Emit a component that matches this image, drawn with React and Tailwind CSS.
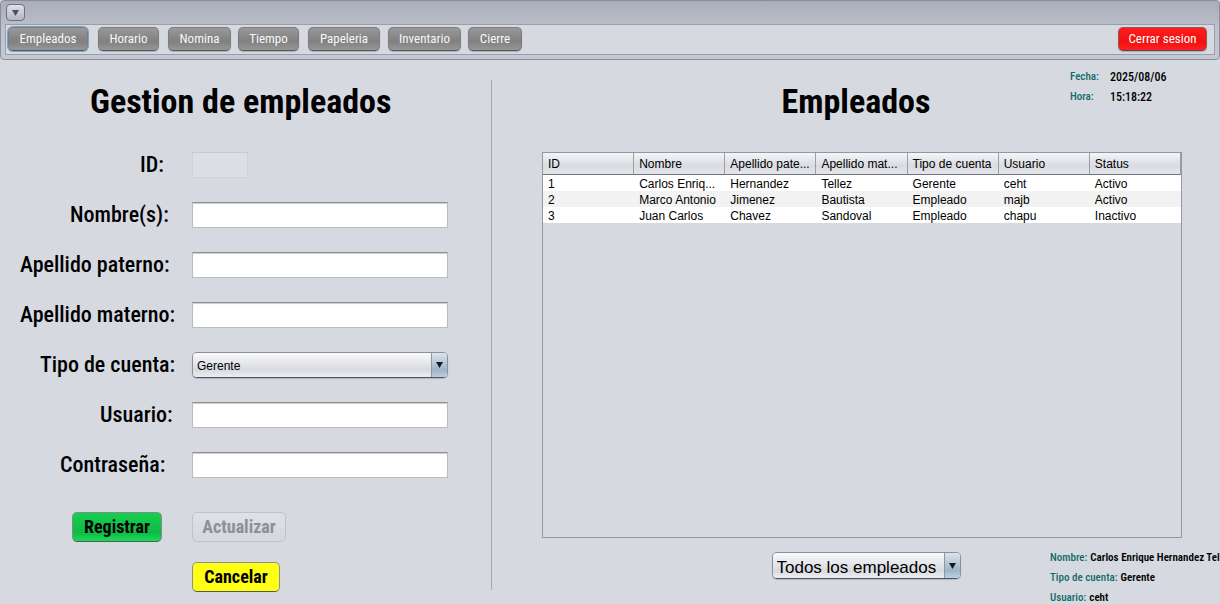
import React from "react";

const NARROW = "font-['Roboto_Condensed','Liberation_Sans_Narrow','Arial_Narrow',sans-serif]";

const tabs = [
  { label: "Empleados", cell: "w-[90px]", button: "w-[80px]", active: true },
  { label: "Horario", cell: "w-[70px]", button: "w-[61px]" },
  { label: "Nomina", cell: "w-[70px]", button: "w-[63px]" },
  { label: "Tiempo", cell: "w-[70px]", button: "w-[61px]" },
  { label: "Papeleria", cell: "w-[80px]", button: "w-[72px]" },
  { label: "Inventario", cell: "w-[80px]", button: "w-[73px]" },
  { label: "Cierre", cell: "w-[54px]", button: "w-[54px]" },
];

const columns = [
  "ID",
  "Nombre",
  "Apellido pate...",
  "Apellido mat...",
  "Tipo de cuenta",
  "Usuario",
  "Status",
];

const rows = [
  ["1", "Carlos Enriq...", "Hernandez", "Tellez", "Gerente", "ceht", "Activo"],
  ["2", "Marco Antonio", "Jimenez", "Bautista", "Empleado", "majb", "Activo"],
  ["3", "Juan Carlos", "Chavez", "Sandoval", "Empleado", "chapu", "Inactivo"],
];

function Toolbar() {
  return (
    <header className="rounded-sm border border-[#8b8e99] bg-linear-to-b from-[#a9adb9] via-[#bfc2cc] via-50% to-[#c6c9d3] px-1 pb-1 pt-[3px]">
      <button
        type="button"
        aria-label="Menu"
        className="ml-px flex h-[17px] w-[19px] items-center justify-center rounded border border-[#6d7180] bg-linear-to-b from-[#dfe1e8] to-[#b3b7c3]"
      >
        <svg viewBox="0 0 7 6" className="h-[6px] w-[7px]" aria-hidden="true">
          <path d="M0 0H7L3.5 6Z" fill="#4c505c" />
        </svg>
      </button>
      <nav className="mt-[3px] flex h-[31px] items-start justify-between border border-[#9a9dab] bg-[#d6d9e0] pl-[2px] pr-[7px] pt-[2px]">
        <ul className="flex">
          {tabs.map((tab) => (
            <li key={tab.label} className={tab.cell}>
              <button
                type="button"
                className={`block h-6 rounded-[5px] border border-[#7d7d7d] border-b-[#55575d] bg-linear-to-b from-[#999999] via-[#808080] via-60% to-[#979797] text-center text-[13px] leading-[22px] text-[#f7f7f7] ${tab.button} ${
                  tab.active ? "ring-1 ring-[#73a4d1]" : "shadow-[0_1px_1px_#a9acb4]"
                }`}
              >
                {tab.label}
              </button>
            </li>
          ))}
        </ul>
        <button
          type="button"
          className="h-6 w-[89px] rounded-[5px] border border-[#94585c] border-b-[#5b4a50] bg-linear-to-b from-[#ff1d1d] via-[#f01010] via-60% to-[#ff1f1f] text-[13px] leading-[22px] text-white shadow-[0_1px_1px_#a9acb4]"
        >
          Cerrar sesion
        </button>
      </nav>
    </header>
  );
}

function Field({ id, label, indent, children }) {
  return (
    <div className="flex h-[50px] items-center">
      <label htmlFor={id} className={`w-48 shrink-0 whitespace-nowrap text-[22px] font-medium leading-7 ${indent}`}>
        {label}
      </label>
      {children}
    </div>
  );
}

function TextField({ id, label, indent, type = "text" }) {
  return (
    <Field id={id} label={label} indent={indent}>
      <input
        id={id}
        type={type}
        className="h-[26px] w-64 border border-[#b9bbbf] border-t-[#8b8c90] bg-white px-1 font-['Liberation_Sans',Arial,sans-serif] text-xs shadow-[inset_0_1px_1px_#cfcfcf] outline-none"
      />
    </Field>
  );
}

function Combo({ id, label, size, options }) {
  return (
    <div className={`relative overflow-hidden rounded-[5px] border border-[#8d9097] border-b-[#4f535c] shadow-[0_1px_1px_#b4b7be] ${size}`}>
      <select
        id={id}
        aria-label={label}
        className="h-full w-full appearance-none bg-linear-to-b from-[#fafafc] via-[#d8dadf] via-70% to-[#eceef3] pl-1 pr-5 pt-[2px] font-['Liberation_Sans',Arial,sans-serif] text-black outline-none"
      >
        {options.map((option) => (
          <option key={option}>{option}</option>
        ))}
      </select>
      <span className="pointer-events-none absolute inset-y-0 right-0 flex w-4 items-center justify-center border-l border-[#8798a8] bg-linear-to-b from-[#dbe5ee] via-[#9fb4c8] via-70% to-[#b9cfe4]">
        <svg viewBox="0 0 7 6" className="h-[6px] w-[7px]" aria-hidden="true">
          <path d="M0 0H7L3.5 6Z" fill="#1a1a1a" />
        </svg>
      </span>
    </div>
  );
}

function EmployeeForm() {
  return (
    <section className="w-[491px] shrink-0">
      <h1 className="flex h-20 items-center pl-[90px] pt-[2px] text-[34px] font-bold leading-10">
        Gestion de empleados
      </h1>
      <form>
        <Field id="id" label="ID:" indent="pl-[140px]">
          <input
            id="id"
            disabled
            className="h-[26px] w-14 border border-[#cfd2d7] border-t-[#c6c9ce] bg-[#dcdfe4]"
          />
        </Field>
        <TextField id="nombre" label="Nombre(s):" indent="pl-[70px]" />
        <TextField id="paterno" label="Apellido paterno:" indent="pl-5" />
        <TextField id="materno" label="Apellido materno:" indent="pl-5" />
        <Field id="tipo" label="Tipo de cuenta:" indent="pl-10">
          <Combo id="tipo" size="h-[26px] w-64 text-xs" options={["Gerente", "Empleado"]} />
        </Field>
        <TextField id="usuario" label="Usuario:" indent="pl-[100px]" />
        <TextField id="clave" label="Contraseña:" indent="pl-[60px]" type="password" />
        <div className="grid grid-cols-[120px_1fr] items-center gap-y-5 pl-[72px] pt-[22px] text-lg font-bold leading-6">
          <button
            type="button"
            className="h-[30px] w-[90px] rounded-[5px] border border-[#7f8f87] border-b-[#4b5f54] bg-linear-to-b from-[#16d050] via-[#0fb944] via-70% to-[#1bdb58]"
          >
            Registrar
          </button>
          <button
            type="button"
            disabled
            className="h-[30px] w-[94px] rounded-[5px] border border-[#bfc2c8] bg-linear-to-b from-[#dfe1e6] to-[#d4d7dd] text-[#8e9095]"
          >
            Actualizar
          </button>
          <button
            type="button"
            className="col-start-2 h-[30px] w-[88px] rounded-[5px] border border-[#8f9097] border-b-[#55565c] bg-[#ffff14]"
          >
            Cancelar
          </button>
        </div>
      </form>
    </section>
  );
}

function EmployeeTable() {
  return (
    <div className="ml-[50px] mr-[38px] h-[386px] border border-[#9297a1]">
      <table className="w-full table-fixed border-separate border-spacing-0 font-['Liberation_Sans',Arial,sans-serif] text-xs">
        <thead>
          <tr className="h-[22px] bg-linear-to-b from-[#f4f5f8] via-[#d9dbe0] via-60% to-[#e6e8ee]">
            {columns.map((column) => (
              <th
                key={column}
                className="whitespace-nowrap border-b border-r border-b-[#6f737b] border-r-[#9a9ea6] p-0 pl-[5px] text-left font-normal"
              >
                {column}
              </th>
            ))}
          </tr>
        </thead>
        <tbody>
          {rows.map((row) => (
            <tr key={row[0]} className="h-4 bg-white even:bg-[#f2f2f2]">
              {row.map((value, index) => (
                <td key={columns[index]} className="whitespace-nowrap p-0 pl-[5px] pt-[2px] leading-[14px]">
                  {value}
                </td>
              ))}
            </tr>
          ))}
        </tbody>
      </table>
    </div>
  );
}

function InfoLine({ label, value }) {
  return (
    <p className="flex gap-[3px] whitespace-nowrap">
      <span className="font-medium text-[#13696b]">{label}</span>
      <span className="font-semibold">{value}</span>
    </p>
  );
}

function EmployeeList() {
  return (
    <section className="min-w-0 flex-1">
      <div className="grid h-[92px] grid-cols-[1fr_auto_1fr]">
        <h2 className="col-start-2 flex h-20 items-center pt-[2px] text-[34px] font-bold leading-10">
          Empleados
        </h2>
        <dl className="mr-[50px] mt-[7px] grid grid-cols-[40px_60px] content-start justify-self-end font-medium leading-5">
          <dt className="text-[11px] leading-5 text-[#13696b]">Fecha:</dt>
          <dd className="text-xs leading-5">2025/08/06</dd>
          <dt className="text-[11px] leading-5 text-[#13696b]">Hora:</dt>
          <dd className="text-xs leading-5">15:18:22</dd>
        </dl>
      </div>
      <EmployeeTable />
      <div className="grid grid-cols-[1fr_auto_1fr] items-start pl-5 pt-[10px]">
        <div className="col-start-2 pt-1">
          <Combo
            id="filtro"
            label="Filtro de empleados"
            size="h-[27px] w-[189px] text-[17px]"
            options={["Todos los empleados"]}
          />
        </div>
        <div className="w-[170px] justify-self-end text-[11px] leading-5">
          <InfoLine label="Nombre:" value="Carlos Enrique Hernandez Tellez" />
          <InfoLine label="Tipo de cuenta:" value="Gerente" />
          <InfoLine label="Usuario:" value="ceht" />
        </div>
      </div>
    </section>
  );
}

export default function App() {
  return (
    <div className={`h-screen overflow-hidden bg-[#d6d9e0] text-black ${NARROW}`}>
      <Toolbar />
      <main className="flex">
        <EmployeeForm />
        <div className="my-5 h-[510px] w-px shrink-0 bg-[#a4a7b2]" />
        <EmployeeList />
      </main>
    </div>
  );
}
